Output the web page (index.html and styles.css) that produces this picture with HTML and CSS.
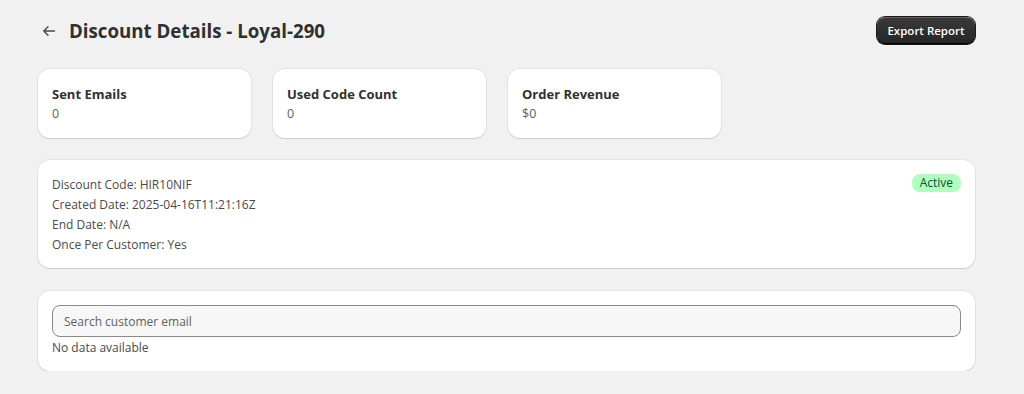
FILE: index.html
```html
<!DOCTYPE html>
<html lang="en">
<head>
<meta charset="utf-8">
<title>Discount Details</title>
<link rel="stylesheet" href="styles.css">
</head>
<body>
<div class="page">
  <header class="page-header">
    <div class="title-group">
      <button class="back" aria-label="Back">
        <svg width="14" height="14" viewBox="0 0 14 14" fill="none" stroke="currentColor" stroke-width="1.4" stroke-linecap="round" stroke-linejoin="round"><path d="M12.5 7H1.8M6 2.8 1.8 7 6 11.2"/></svg>
      </button>
      <h1 class="title">Discount Details - Loyal-290</h1>
    </div>
    <button class="btn-primary">Export Report</button>
  </header>

  <section class="metrics">
    <div class="card metric">
      <div class="metric-label">Sent Emails</div>
      <div class="metric-value">0</div>
    </div>
    <div class="card metric">
      <div class="metric-label">Used Code Count</div>
      <div class="metric-value">0</div>
    </div>
    <div class="card metric">
      <div class="metric-label">Order Revenue</div>
      <div class="metric-value">$0</div>
    </div>
  </section>

  <section class="card details">
    <div class="details-list">
      <div>Discount Code: HIR10NIF</div>
      <div>Created Date: 2025-04-16T11:21:16Z</div>
      <div>End Date: N/A</div>
      <div>Once Per Customer: Yes</div>
    </div>
    <span class="badge">Active</span>
  </section>

  <section class="card customers">
    <input class="search" type="text" placeholder="Search customer email">
    <div class="empty">No data available</div>
  </section>
</div>
</body>
</html>
```

FILE: styles.css
```css
* { box-sizing: border-box; }

html, body {
  margin: 0;
  background: #f1f1f1;
}

body {
  font-family: "Open Sans", "Noto Sans", sans-serif;
  font-size: 12px;
  line-height: 20px;
  color: #303030;
}

.page {
  width: 937px;
  margin-left: 38px;
  padding-top: 17px;
  display: flex;
  flex-direction: column;
}

.page-header {
  display: flex;
  justify-content: space-between;
  align-items: center;
  height: 27px;
}

.title-group {
  display: flex;
  align-items: center;
  gap: 10px;
}

.back {
  border: 0;
  background: none;
  padding: 0;
  width: 21px;
  height: 20px;
  display: flex;
  align-items: center;
  justify-content: center;
  color: #4a4a4a;
  cursor: pointer;
}

.title {
  margin: 0;
  font-size: 18.7px;
  line-height: 24px;
  font-weight: 700;
  color: #303030;
}

.btn-primary {
  height: 27px;
  width: 98px;
  padding: 0;
  border: 0;
  border-radius: 8px;
  background: linear-gradient(#3a3a3a, #262626);
  box-shadow: inset 0 1px 0 rgba(255,255,255,0.2), inset 0 -1px 0 #000, 0 0 0 1px #1a1a1a;
  color: #fff;
  font-family: inherit;
  font-size: 11.5px;
  font-weight: 600;
  white-space: nowrap;
  cursor: pointer;
}

.card {
  background: #fff;
  border-radius: 12px;
  box-shadow: 0 1px 1px rgba(0,0,0,0.10), 0 0 0 1px rgba(0,0,0,0.05);
}

.metrics {
  display: flex;
  gap: 22px;
  margin-top: 25px;
}

.metric {
  width: 213px;
  padding: 15px 14px 14px;
}

.metric-label {
  font-size: 13px;
  font-weight: 700;
  color: #303030;
  line-height: 20px;
}

.metric-value {
  font-size: 12.5px;
  color: #616161;
  line-height: 20px;
}

.details {
  margin-top: 22px;
  padding: 14px 14px 13px;
  display: flex;
  justify-content: space-between;
  align-items: flex-start;
}

.details-list {
  color: #4a4a4a;
  padding-top: 1px;
}

.badge {
  display: inline-flex;
  align-items: center;
  height: 18px;
  padding: 0 8px;
  border-radius: 8px;
  background: #affebf;
  color: #0c5132;
  font-size: 12px;
  line-height: 18px;
}

.customers {
  margin-top: 23px;
  padding: 14px 14px 13px;
}

.search {
  display: block;
  width: 100%;
  height: 32px;
  padding: 0 11px;
  border: 1px solid #8a8a8a;
  border-radius: 8px;
  background: #f7f7f7;
  font-family: inherit;
  font-size: 12px;
  color: #303030;
}

.search::placeholder {
  color: #616161;
}

.empty {
  color: #4a4a4a;
  padding-top: 1px;
}
```
